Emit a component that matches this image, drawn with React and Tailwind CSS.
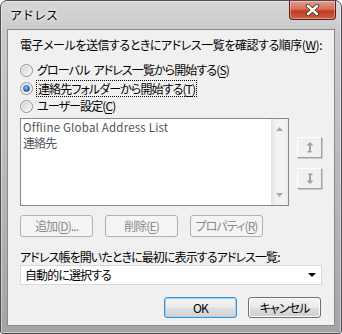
import React from 'react';

const ui = "font-['Noto_Sans_CJK_JP',sans-serif] [font-feature-settings:'palt'] text-[12px] leading-[16px] tracking-[-0.9px] whitespace-nowrap";

function Radio({ checked }) {
  return (
    <svg width="13" height="13" viewBox="0 0 13 13" className="shrink-0">
      <defs>
        <linearGradient id="rbFill" x1="0" y1="0" x2="1" y2="1">
          <stop offset="0" stopColor="#cdd0d3" />
          <stop offset="1" stopColor="#fbfbfb" />
        </linearGradient>
        <radialGradient id="rbDot" cx="0.45" cy="0.4" r="0.6">
          <stop offset="0" stopColor="#9fd3ff" />
          <stop offset="0.5" stopColor="#3a86d3" />
          <stop offset="1" stopColor="#183f7a" />
        </radialGradient>
      </defs>
      <circle cx="6.5" cy="6.5" r="6" fill="#f3f3f3" stroke="#8f9090" />
      <circle cx="6.5" cy="6.5" r="4.6" fill="url(#rbFill)" />
      {checked && <circle cx="6.5" cy="6.5" r="3.2" fill="url(#rbDot)" />}
    </svg>
  );
}

function MoveButton({ down }) {
  return (
    <div className="w-[25px] h-[21px] flex items-center justify-center bg-[#f0f0f0] border-t border-l border-white border-r border-b border-r-[#a0a0a0] border-b-[#a0a0a0] shadow-[1px_1px_0_#c9c9c9]">
      <svg width="8" height="11" viewBox="0 0 8 11" className={down ? 'rotate-180' : ''}>
        <path d="M4 0 L7.5 3.5 L0.5 3.5 Z" fill="#a0a0a0" />
        <rect x="3" y="3" width="2" height="6" fill="#a0a0a0" />
        <rect x="1.5" y="9" width="4" height="1.5" fill="#a0a0a0" />
      </svg>
    </div>
  );
}

function Mn({ children }) {
  return <span className="underline underline-offset-2">{children}</span>;
}

export default function App() {
  return (
    <div className={`w-[342px] h-[334px] flex flex-col rounded-t-[7px] rounded-b-[3px] border border-[#4b4f55] bg-[linear-gradient(180deg,#d6d6d6_0%,#c9c9c9_10%,#b6b6b6_60%,#a4a4a4_100%)] shadow-[inset_0_0_0_1px_rgba(255,255,255,0.45)] ${ui}`}>
      {/* title bar */}
      <div className="h-[28px] shrink-0 flex items-start justify-between">
        <div className="pl-[9px] pt-[6px] text-[12px] tracking-normal [font-feature-settings:normal] text-black [text-shadow:0_0_6px_#fff,0_0_3px_#fff]">アドレス</div>
        <div className="mr-[5px] w-[47px] h-[19px] rounded-b-[4px] border border-t-0 border-[#5b2114] bg-[linear-gradient(180deg,#e59a88_0%,#d5705a_45%,#c23a22_55%,#cc6048_100%)] shadow-[inset_0_0_0_1px_rgba(255,255,255,0.35)] flex items-center justify-center">
          <svg width="15" height="12" viewBox="0 0 15 12">
            <path d="M3 2 L12 10 M12 2 L3 10" stroke="#4b2a22" strokeWidth="4.2" strokeLinecap="round" />
            <path d="M3 2 L12 10 M12 2 L3 10" stroke="#ffffff" strokeWidth="2.6" strokeLinecap="round" />
          </svg>
        </div>
      </div>

      {/* client area */}
      <div className="mx-[6px] w-[328px] h-[297px] border border-[#858a90] bg-[#f0f0f0] pl-[12px] pr-[12px] pt-[7px] flex flex-col text-black">
        <div className="h-[16px] tracking-[-0.45px]">電子メールを送信するときにアドレス一覧を確認する順序(<Mn>W</Mn>):</div>

        <div className="mt-[8px] flex flex-col">
          <div className="h-[18px] flex items-center gap-[4px]">
            <Radio />
            <span>グローバル<span className="ml-[4px]">アドレス一覧から開始する(<Mn>S</Mn>)</span></span>
          </div>
          <div className="h-[18px] flex items-center gap-[3px]">
            <Radio checked />
            <span className="border border-dotted border-black px-[1px] leading-[15px]">連絡先フォルダーから開始する(<Mn>T</Mn>)</span>
          </div>
          <div className="h-[18px] flex items-center gap-[4px]">
            <Radio />
            <span>ユーザー設定(<Mn>C</Mn>)</span>
          </div>
        </div>

        <div className="mt-[3px] flex items-start gap-[8px]">
          <div className="w-[270px] h-[88px] border border-[#828790] bg-white flex">
            <div className="flex-1 pl-[2px] pt-[1px] text-[#4f5560] leading-[15px]">
              <div className="text-[11.5px] tracking-[0.2px]">Offline Global Address List</div>
              <div>連絡先</div>
            </div>
            <div className="w-[17px] flex flex-col items-center justify-between py-[8px] bg-[linear-gradient(90deg,#e3e3e3_0%,#f1f1f1_30%,#f4f4f4_70%,#ebebeb_100%)]">
              <svg width="7" height="4" viewBox="0 0 7 4"><path d="M3.5 0 L7 4 L0 4 Z" fill="#a7a7a7" /></svg>
              <svg width="7" height="4" viewBox="0 0 7 4"><path d="M0 0 L7 0 L3.5 4 Z" fill="#a7a7a7" /></svg>
            </div>
          </div>
          <div className="pt-[19px] flex flex-col gap-[10px]">
            <MoveButton />
            <MoveButton down />
          </div>
        </div>

        <div className="mt-[9px] flex gap-[12px]">
          {[
            <>追加(<Mn>D</Mn>)...</>,
            <>削除(<Mn>E</Mn>)</>,
            <>プロパティ(<Mn>R</Mn>)</>,
          ].map((label, i) => (
            <div key={i} className="w-[73px] h-[22px] rounded-[3px] border border-[#adb2b5] bg-[#f4f4f4] text-[#8a8a8a] flex items-center justify-center">
              {label}
            </div>
          ))}
        </div>

        <div className="mt-[12px] h-[16px]">アドレス帳を開いたときに最初に表示するアドレス一覧:</div>

        <div className="w-[302px] h-[20px] border border-[#d9d9d9] bg-white flex items-center justify-between pl-[4px] pr-[5px]">
          <span>自動的に選択する</span>
          <svg width="8" height="4" viewBox="0 0 8 4"><path d="M0 0 L8 0 L4 4 Z" fill="#000" /></svg>
        </div>

        <div className="mt-[12px] flex justify-end gap-[11px] pr-[1px]">
          <div className="w-[73px] h-[21px] rounded-[3px] border border-[#3c8fd6] shadow-[inset_0_0_0_1px_#9fd8fb] bg-[linear-gradient(180deg,#f4f4f4_0%,#ececec_48%,#dfdfdf_52%,#d1d1d1_100%)] flex items-center justify-center">
            OK
          </div>
          <div className="w-[73px] h-[21px] rounded-[3px] border border-[#707070] shadow-[inset_0_0_0_1px_#fcfcfc] bg-[linear-gradient(180deg,#f2f2f2_0%,#ebebeb_48%,#dddddd_52%,#cfcfcf_100%)] flex items-center justify-center">
            キャンセル
          </div>
        </div>
      </div>
    </div>
  );
}
